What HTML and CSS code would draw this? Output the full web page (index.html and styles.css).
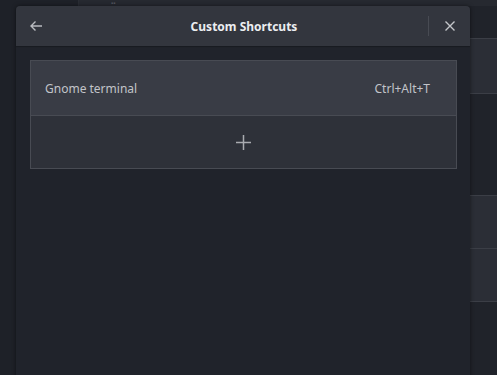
FILE: index.html
```html
<!DOCTYPE html>
<html lang="en">
<head>
<meta charset="UTF-8">
<title>Custom Shortcuts</title>
<link rel="stylesheet" href="styles.css">
</head>
<body>

<!-- Settings window behind the dialog -->
<div class="backdrop">
  <div class="sidebar"></div>
  <div class="main">
    <div class="main-top"><span class="dots">▪▪</span></div>
    <div class="bg-row bg-row-first"></div>
    <div class="bg-gap"></div>
    <div class="bg-row"></div>
    <div class="bg-row"></div>
  </div>
</div>

<!-- Dialog -->
<div class="dialog">
  <div class="header">
    <button class="icon-btn back">
      <svg width="14" height="12" viewBox="0 0 14 12"><path d="M13 6H2M6.5 1.5L2 6l4.5 4.5" fill="none" stroke="#b9bbc0" stroke-width="1.4"/></svg>
    </button>
    <h1 class="title">Custom Shortcuts</h1>
    <span class="sep"></span>
    <button class="icon-btn close">
      <svg width="12" height="12" viewBox="0 0 12 12"><path d="M1.5 1.5l9 9M10.5 1.5l-9 9" fill="none" stroke="#c4c6ca" stroke-width="1.4"/></svg>
    </button>
  </div>

  <div class="content">
    <div class="list">
      <div class="row">
        <span class="name">Gnome terminal</span>
        <span class="keys">Ctrl+Alt+T</span>
      </div>
      <div class="row add">
        <svg width="15" height="15" viewBox="0 0 15 15"><path d="M7.5 0v15M0 7.5h15" stroke="#a9abb0" stroke-width="1.5"/></svg>
      </div>
    </div>
  </div>
</div>

</body>
</html>
```

FILE: styles.css
```css
body {
  margin: 0;
  width: 497px;
  height: 375px;
  overflow: hidden;
  background: #1f2229;
  font-family: "Noto Sans", "Open Sans", sans-serif;
  position: relative;
}

/* background window */
.backdrop {
  display: flex;
  height: 100%;
}
.sidebar {
  width: 78px;
  background: #1e2128;
  border-right: 1px solid #2a2d34;
}
.main {
  flex: 1;
  display: flex;
  flex-direction: column;
  background: #20232a;
}
.main-top {
  height: 6px;
  background: #262930;
  padding-left: 32px;
  font-size: 6px;
  color: #555860;
  line-height: 6px;
}
.bg-row {
  height: 52px;
  background: #2b2e36;
  border-bottom: 1px solid #3b3e46;
}
.bg-row-first {
  margin-top: 32px;
  height: 54px;
  border-top: 1px solid #3b3e46;
}
.bg-gap {
  height: 101px;
  border-bottom: 1px solid #3b3e46;
}

/* dialog */
.dialog {
  position: absolute;
  left: 16px;
  top: 6px;
  width: 454px;
  height: 380px;
  background: #20232b;
  border-radius: 4px 4px 0 0;
  box-shadow: 0 0 4px rgba(0, 0, 0, 0.5);
  display: flex;
  flex-direction: column;
}
.header {
  height: 40px;
  background: #33363e;
  border-radius: 4px 4px 0 0;
  display: flex;
  align-items: center;
  padding: 0 8px 0 8px;
  box-shadow: 0 1px 1px rgba(0, 0, 0, 0.25);
}
.icon-btn {
  background: none;
  border: 0;
  padding: 0;
  width: 24px;
  height: 24px;
  display: flex;
  align-items: center;
  justify-content: center;
}
.title {
  flex: 1;
  margin: 0;
  text-align: center;
  font-size: 12px;
  font-weight: bold;
  color: #eceef1;
  padding-left: 12px;
}
.sep {
  width: 1px;
  height: 20px;
  background: #484b53;
  margin-right: 9px;
}

.content {
  padding: 14px 13px 0 14px;
}
.list {
  border: 1px solid #484b53;
}
.row {
  height: 54px;
  display: flex;
  align-items: center;
  justify-content: space-between;
  padding: 0 26px 0 14px;
  background: #393c45;
  font-size: 12px;
  color: #c2c4c9;
}
.row.add {
  height: 52px;
  justify-content: center;
  background: #2e3139;
  border-top: 1px solid #484b53;
  padding: 0;
}
```
